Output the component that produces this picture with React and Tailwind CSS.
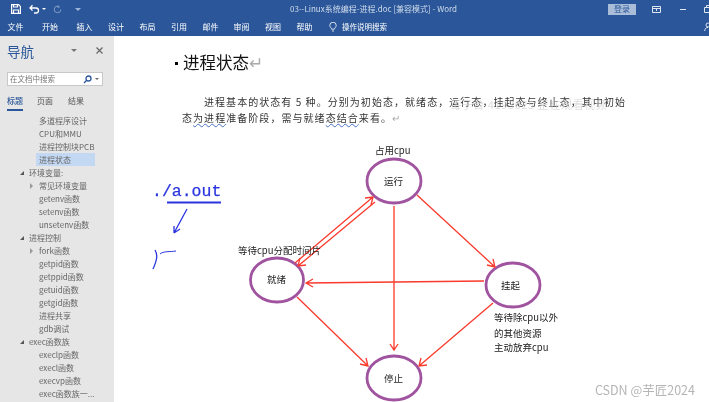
import React from "react";

const cjk = { fontFamily: '"Noto Sans CJK SC", "Liberation Sans", sans-serif' };
const tabs = ["文件", "开始", "插入", "设计", "布局", "引用", "邮件", "审阅", "视图", "帮助"];
const tabClass = ["w-[31px]", "w-[38px]", "w-[31px]", "w-[32px]", "w-[31px]", "w-[32px]", "w-[31px]", "w-[31px]", "w-[32px]", "w-[31px]"];

const tree = [
  ["多道程序设计", 2],
  ["CPU和MMU", 2],
  ["进程控制块PCB", 2],
  ["进程状态", 2, "sel"],
  ["环境变量:", 1, "open"],
  ["常见环境变量", 2, "closed"],
  ["getenv函数", 2],
  ["setenv函数", 2],
  ["unsetenv函数", 2],
  ["进程控制", 1, "open"],
  ["fork函数", 2, "closed"],
  ["getpid函数", 2],
  ["getppid函数", 2],
  ["getuid函数", 2],
  ["getgid函数", 2],
  ["进程共享", 2],
  ["gdb调试", 2],
  ["exec函数族", 1, "open"],
  ["execlp函数", 2],
  ["execl函数", 2],
  ["execvp函数", 2],
  ["exec函数族一...", 2],
];

function TreeRow({ label, level, flag }) {
  return (
    <div className="relative flex h-[13px] items-center text-[8px] leading-[13px] text-[#666]">
      {flag === "open" && <span className="absolute left-[20px] top-[5px] h-0 w-0 border-b-[4px] border-l-[4px] border-b-[#555] border-l-transparent" />}
      {flag === "closed" && <span className="absolute left-[30px] top-[4px] h-0 w-0 border-y-[3px] border-l-[3px] border-y-transparent border-l-[#999]" />}
      <span className={level === 1 ? "ml-[29px] whitespace-nowrap" : flag === "sel" ? "ml-[36px] flex h-[13px] w-[59px] items-center whitespace-nowrap bg-[#c3d8f3] pl-[3px]" : "ml-[39px] whitespace-nowrap"}>{label}</span>
    </div>
  );
}

function Arrow({ d }) {
  return <path d={d} fill="none" stroke="#fa3a2c" strokeWidth="1.3" />;
}

function Diagram() {
  const node = "fill-white stroke-[#a0539f]";
  return (
    <svg viewBox="114 140 595 262" className="block h-[262px] w-[595px]" style={cjk}>
      <ellipse cx="394" cy="181" rx="27" ry="22" className={node} strokeWidth="2.8" />
      <ellipse cx="277" cy="280" rx="26.5" ry="22" className={node} strokeWidth="2.8" />
      <ellipse cx="513" cy="285" rx="27" ry="22" className={node} strokeWidth="2.8" />
      <ellipse cx="394" cy="378" rx="27" ry="22" className={node} strokeWidth="2.8" />

      <Arrow d="M295 263 L373 197 M365 198 L373 197 L371 205" />
      <Arrow d="M375 202 L298 266 M306 265 L298 266 L300 258" />
      <Arrow d="M394 206 L394 350 M390 344 L394 350 L398 344" />
      <Arrow d="M417 195 L495 267 M487 265 L495 267 L493 259" />
      <Arrow d="M484 281 L306 283 M313 279 L306 283 L313 287" />
      <Arrow d="M493 303 L419 366 M427 365 L419 366 L421 358" />
      <Arrow d="M297 297 L368 366 M360 364 L368 366 L366 358" />

      <g fontSize="9.5" fill="#222">
        <text x="375" y="154">占用cpu</text>
        <text x="238" y="254">等待cpu分配时间片</text>
        <text x="384" y="185">运行</text>
        <text x="267" y="283">就绪</text>
        <text x="501" y="289">挂起</text>
        <text x="384" y="382">停止</text>
        <text x="494" y="321">等待除cpu以外</text>
        <text x="494" y="337">的其他资源</text>
        <text x="494" y="351">主动放弃cpu</text>
      </g>

      <text x="152" y="196" fontSize="16.5" fill="#2a35e0" stroke="#2a35e0" strokeWidth="0.25" style={{ fontFamily: '"Liberation Mono", monospace' }}>./a.out</text>
      <g fill="none" stroke="#2a35e0">
        <path d="M167 202.5 L221 202.5" strokeWidth="1.8" />
        <path d="M187 209 L174 233 M174 233 L174 226 M174 233 L180 229" strokeWidth="1.3" />
        <path d="M155 250 C158 255 157 260 153 269" strokeWidth="1.3" />
        <path d="M160 254 C163 251 170 252 176 251" strokeWidth="1" />
      </g>
    </svg>
  );
}

export default function App() {
  return (
    <div className="relative h-[402px] w-[709px] overflow-hidden bg-white blur-[0.45px]" style={cjk}>
      <header className="h-[36px] bg-[#2b579a] text-[#dfe7f3]">
        <div className="relative flex h-[18px] items-center">
          <div className="flex items-center pl-[11px]">
            <svg width="10" height="10" viewBox="0 0 10 10" fill="none" stroke="white" strokeWidth="1.2"><path d="M.6.6h7l1.8 1.8v7H.6z" /><path d="M2.5 9V6h5v3M2.5.8V3h4V.8" /></svg>
            <svg className="ml-[8px]" width="11" height="10" viewBox="0 0 11 10" fill="none" stroke="white" strokeWidth="1.3"><path d="M1 4h6a2.5 2.5 0 0 1 0 5H5M3.5 1.2 1 4l2.5 2.6" /></svg>
            <span className="ml-[2px] h-0 w-0 border-x-[2px] border-t-[2px] border-x-transparent border-t-white" />
            <svg className="ml-[7px] opacity-40" width="9" height="9" viewBox="0 0 9 9" fill="none" stroke="white"><path d="M7.8 4.5A3.3 3.3 0 1 1 5 1.2M5 .2v2.5L7 1.5" /></svg>
            <span className="ml-[13px] h-0 w-0 border-x-[3px] border-t-[3px] border-x-transparent border-t-[#9fb6d8]" />
          </div>
          <span className="absolute left-[290px] whitespace-nowrap text-[8px] leading-[14px] text-[#cfdbeb]">03--Linux系统编程-进程.doc [兼容模式]  -  Word</span>
          <div className="ml-auto flex items-center">
            <span className="flex h-[11px] w-[28px] items-center justify-center bg-[#a9bdd9] text-[8px] text-[#2b579a]">登录</span>
            <svg className="ml-[16px]" width="9" height="7" viewBox="0 0 9 7" fill="none" stroke="#dfe7f3"><path d="M.5.5h8v6h-8zM.5 2.5h8M4.5 3v2" /></svg>
            <span className="ml-[19px] h-px w-[6px] bg-[#dfe7f3]" />
            <svg className="ml-[18px] mr-[-3px]" width="8" height="8" viewBox="0 0 8 8" fill="none" stroke="#dfe7f3"><path d="M.5 2.5h5v5h-5zM2.5 2.5v-2h5v5h-2" /></svg>
          </div>
        </div>
        <nav className="relative flex h-[18px] items-start text-[8px] leading-[17px] text-white">
          {tabs.map((t, i) => (
            <span key={t} className={`${tabClass[i]} text-center`}>{t}</span>
          ))}
          <svg className="ml-[9px] mt-[4px]" width="8" height="10" viewBox="0 0 8 10" fill="none" stroke="white" strokeWidth=".8"><path d="M2.6 7.2C2.4 5.6.8 5.2.8 3.4a3.2 3.2 0 0 1 6.4 0c0 1.8-1.6 2.2-1.8 3.8zM3 9h2" /></svg>
          <span className="ml-[5px] text-[7.5px]">操作说明搜索</span>
          <svg className="absolute right-[-3px] top-[4px]" width="8" height="10" viewBox="0 0 8 10" fill="none" stroke="white" strokeWidth=".8"><circle cx="4" cy="3" r="2" /><path d="M.6 9c.4-2.6 1.6-3.6 3.4-3.6" /></svg>
        </nav>
      </header>

      <main className="flex h-[366px]">
        <aside className="h-full w-[114px] shrink-0 overflow-hidden bg-[#e6e6e6]">
          <div className="relative flex h-[36px] items-start pl-[7px] pt-[9px]">
            <span className="text-[13.5px] leading-none text-[#2b579a]">导航</span>
            <span className="absolute left-[71px] top-[13px] h-0 w-0 border-x-[3px] border-t-[3px] border-x-transparent border-t-[#777]" />
            <svg className="absolute left-[96px] top-[11px]" width="7" height="7" viewBox="0 0 7 7" stroke="#666" strokeWidth="1.2"><path d="M.5.5l6 6M6.5.5l-6 6" /></svg>
          </div>
          <div className="ml-[7px] flex h-[14px] w-[96px] items-center border border-[#c8c8c8] bg-white pl-[2px] text-[7.5px] text-[#777]">
            <span>在文档中搜索</span>
            <svg className="ml-auto" width="9" height="9" viewBox="0 0 9 9" fill="none" stroke="#2b579a" strokeWidth="1.3"><circle cx="5.5" cy="3.5" r="2.5" /><path d="M3.7 5.3 1 8" /></svg>
            <span className="ml-[3px] mr-[3px] h-0 w-0 border-x-[2px] border-t-[2px] border-x-transparent border-t-[#666]" />
          </div>
          <div className="mt-[8px] flex h-[17px] pl-[7px] text-[8px] text-[#555]">
            <span className="h-[17px] w-[16px] whitespace-nowrap border-b-2 border-[#2b579a] font-medium leading-[13px] text-[#2b579a]">标题</span>
            <span className="ml-[14px] leading-[13px]">页面</span>
            <span className="ml-[15px] leading-[13px]">结果</span>
          </div>
          <div className="mt-[3px]">
            {tree.map(([label, level, flag]) => (
              <TreeRow key={label} label={label} level={level} flag={flag} />
            ))}
          </div>
        </aside>

        <section className="relative min-w-0 flex-1 overflow-hidden bg-white text-[#333]">
          <h1 className="box-content flex h-[20px] items-center pl-[61px] pt-[16px] text-[16.5px] font-normal leading-none text-[#111]">
            <span className="mr-[5px] mt-[3px] h-[3px] w-[3px] bg-black" />进程状态<span className="text-[#aaa]">↵</span>
          </h1>
          <p className="mt-[22px] whitespace-nowrap pl-[90px] text-[10px] leading-[16px] tracking-[1.05px]">进程基本的状态有 5 种。分别为初始态，就绪态，运行态，挂起态与终止态，其中初始</p>
          <p className="whitespace-nowrap pl-[68px] text-[10px] leading-[16px] tracking-[1.05px]">态<span className="underline decoration-[#4472c4] decoration-wavy decoration-[0.5px]">为进程</span>准备阶段，需与就绪<span className="underline decoration-[#4472c4] decoration-wavy decoration-[0.5px]">态结合</span>来看。<span className="text-[#aaa]">↵</span></p>
          <div className="mt-[14px]"><Diagram /></div>
          <span className="absolute left-[336px] top-[60px] whitespace-nowrap text-[11px] tracking-[0.6px] text-[#cfcfcf]/70">每子台 4193025 正在观看视频</span>
          <span className="absolute bottom-[2px] right-[14px] whitespace-nowrap text-[12.5px] text-[#b5b5b5]">CSDN @芋匠2024</span>
        </section>
      </main>
    </div>
  );
}
